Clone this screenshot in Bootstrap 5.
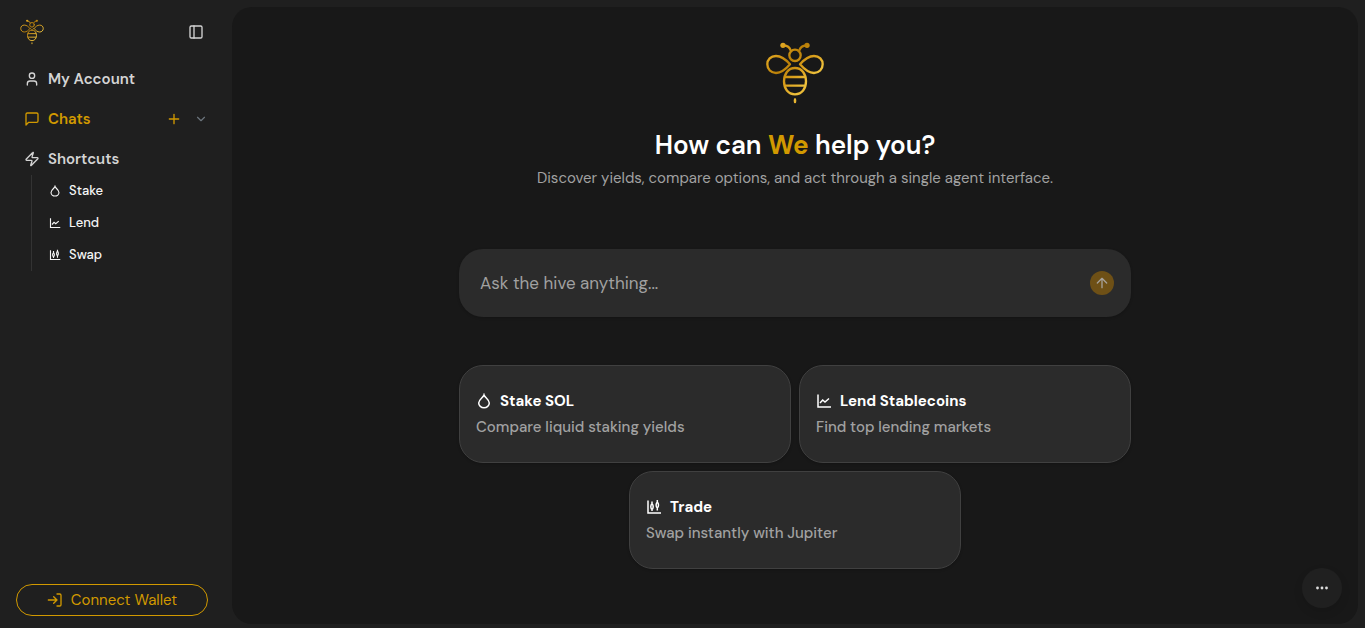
<!DOCTYPE html>
<html lang="en">
<head>
<meta charset="utf-8">
<meta name="viewport" content="width=device-width, initial-scale=1">
<title>The Hive</title>
<link href="https://cdn.jsdelivr.net/npm/bootstrap@5.3.0/dist/css/bootstrap.min.css" rel="stylesheet">
<style>
  :root { --gold: #d19900; --muted: #a1a1a1; --side: #1f1f1f; --panel: #181818; --tile: #2b2b2b; }
  body { background: var(--side); color: #fff; font-family: "DM Sans", Inter, sans-serif; font-size: 15px; line-height: 24px; }
  svg { display: block; flex: none; }
  a { color: inherit; text-decoration: none; }
  .line-icon { fill: none; stroke: currentColor; stroke-width: 2; stroke-linecap: round; stroke-linejoin: round; }
  .chart-icon { fill: none; stroke: currentColor; stroke-width: 1.5; }
  .icon-btn { background: none; border: 0; padding: 0; color: inherit; }
  .sidebar { width: 232px; flex: none; padding: 16px 24px 12px 16px; color: #d4d4d4; }
  .side-head { height: 31px; padding: 0 4px 0 3px; }
  .side-row { height: 40px; padding-left: 8px; font-weight: 600; }
  .gold { color: var(--gold); }
  .side-nav { margin-top: 12px; }
  .row-tools { gap: 12px; }
  .sub-nav { margin: -4px 0 0 15px; border-left: 1px solid #333; font-size: 13px; font-weight: 500; color: #f5f5f5; }
  .sub-nav a { height: 32px; gap: 8px; padding-left: 17px; }
  .wallet { height: 32px; border: 1px solid var(--gold); border-radius: 16px; background: none; color: var(--gold); }
  .panel { background: var(--panel); border-radius: 20px; margin: 7px 7px 4px 0; padding: 34px 16px 16px; min-width: 0; }
  .hero-title { font-size: 26px; line-height: 32px; font-weight: 600; margin: 24px 0 5px; }
  .hero-title .gold { font-weight: 700; }
  .subtitle { color: var(--muted); margin-bottom: 59px; }
  .content { max-width: 672px; }
  .ask { height: 68px; background: var(--tile); border-radius: 24px; padding: 0 17px 0 21px; margin-bottom: 48px; box-shadow: 0 1px 3px rgba(0,0,0,.2); }
  .ask input { background: none; border: 0; outline: 0; color: #fff; font-size: 17px; padding: 0; min-width: 0; }
  .ask input::placeholder { color: var(--muted); opacity: 1; }
  .send { width: 24px; height: 24px; border-radius: 50%; background: #6e5016; color: #a6a19a; }
  .tile { width: 332px; height: 98px; background: var(--tile); border: 1px solid #404040; border-radius: 24px; padding: 0 16px; color: #fff; box-shadow: 0 1px 3px rgba(0,0,0,.2); }
  .tile strong { font-weight: 700; font-size: 15px; }
  .tile-note { color: var(--muted); font-weight: 500; font-size: 15px; margin-top: 2px; }
  .more { right: 23px; bottom: 20px; width: 40px; height: 40px; border-radius: 50%; background: #202020; color: #ddd; box-shadow: 0 4px 10px rgba(0,0,0,.1); }
</style>
<script src="https://cdn.jsdelivr.net/npm/bootstrap@5.3.0/dist/js/bootstrap.bundle.min.js" defer></script>
</head>
<body>
<svg width="0" height="0" class="position-absolute" aria-hidden="true">
  <defs>
    <linearGradient id="honey" gradientUnits="userSpaceOnUse" x1="50" y1="40" x2="110" y2="100" spreadMethod="reflect">
      <stop offset="0" stop-color="#edc03c"/><stop offset=".5" stop-color="#dba01c"/><stop offset="1" stop-color="#b97f08"/>
    </linearGradient>
    <symbol id="bee" viewBox="39 33 192 192">
      <g fill="none" stroke="url(#honey)" stroke-width="7" stroke-linecap="round" stroke-linejoin="round">
        <circle cx="135" cy="76" r="17"/>
        <path d="M102 47Q117 47 122 61M168 47Q153 47 148 61"/>
        <path d="M120 103C108 89 96 78 78 78C62 78 52 89 52 103C52 118 63 129 78 129C96 129 108 117 120 103Z"/>
        <path d="M150 103C162 89 174 78 192 78C208 78 218 89 218 103C218 118 207 129 192 129C174 129 162 117 150 103Z"/>
        <path d="M135 114C114 114 102 132 102 154C102 176 114 193 135 193C156 193 168 176 168 154C168 132 156 114 135 114Z"/>
        <path d="M106 141H164M106 167H164"/>
      </g>
      <g fill="url(#honey)"><circle cx="99" cy="46" r="8"/><circle cx="171" cy="46" r="8"/><ellipse cx="135" cy="212" rx="4" ry="8"/></g>
    </symbol>
    <symbol id="drop" viewBox="0 0 16 16"><path d="M8 2C7.300 4.500 2.700 6.500 2.700 10A5.300 4.700 0 0 0 13.300 10C13.300 6.500 8.700 4.500 8 2Z"/></symbol>
    <symbol id="trend" viewBox="0 0 16 16"><path d="M2 1.500V14H15M4 10L6.700 7L9 9L13 5.500"/></symbol>
    <symbol id="candles" viewBox="0 0 16 16"><path d="M2 1.500V14H15M6 2.500V5M6 10V12M11.300 1V3.500M11.300 8.500V11.500M6 4.800Q4.800 6 4.800 7.700Q4.800 9.500 6 10.500Q7.200 9.500 7.200 7.700Q7.200 6 6 4.800ZM11.300 3Q10.100 4.300 10.100 6Q10.100 8 11.300 9Q12.500 8 12.500 6Q12.500 4.300 11.300 3Z"/></symbol>
  </defs>
</svg>
<div class="d-flex min-vh-100">
  <aside class="sidebar d-flex flex-column">
    <div class="side-head d-flex align-items-center justify-content-between">
      <a href="#" aria-label="Home"><svg width="26" height="26"><use href="#bee"/></svg></a>
      <button class="icon-btn" type="button" aria-label="Toggle sidebar"><svg class="line-icon" width="16" height="16" viewBox="0 0 24 24"><rect x="3" y="3" width="18" height="18" rx="2"/><path d="M9 3v18"/></svg></button>
    </div>
    <nav class="side-nav">
      <a class="side-row d-flex align-items-center gap-2" href="#"><svg class="line-icon" width="16" height="16" viewBox="0 0 24 24"><circle cx="12" cy="7" r="4"/><path d="M19 21v-2a4 4 0 0 0-4-4H9a4 4 0 0 0-4 4v2"/></svg>My Account</a>
      <div class="side-row row-tools d-flex align-items-center">
        <a class="gold d-flex align-items-center gap-2 flex-grow-1" href="#"><svg class="line-icon" width="16" height="16" viewBox="0 0 24 24"><path d="M21 15a2 2 0 0 1-2 2H7l-4 4V5a2 2 0 0 1 2-2h14a2 2 0 0 1 2 2z"/></svg>Chats</a>
        <button class="icon-btn gold" type="button" aria-label="New chat"><svg class="line-icon" width="16" height="16" viewBox="0 0 24 24"><path d="M5 12h14M12 5v14"/></svg></button>
        <button class="icon-btn text-secondary" type="button" aria-label="Expand chats"><svg class="line-icon" width="14" height="14" viewBox="0 0 24 24"><path d="m6 9 6 6 6-6"/></svg></button>
      </div>
      <a class="side-row d-flex align-items-center gap-2" href="#"><svg class="line-icon" width="16" height="16" viewBox="0 0 24 24"><path d="M4 14a1 1 0 0 1-.78-1.630l9.900-10.200a.5.5 0 0 1 .86.460l-1.920 6.020A1 1 0 0 0 13 10h7a1 1 0 0 1 .78 1.630l-9.900 10.200a.5.5 0 0 1-.86-.460l1.920-6.020A1 1 0 0 0 11 14z"/></svg>Shortcuts</a>
      <div class="sub-nav">
        <a class="d-flex align-items-center" href="#"><svg class="chart-icon" width="12" height="12"><use href="#drop"/></svg>Stake</a>
        <a class="d-flex align-items-center" href="#"><svg class="chart-icon" width="12" height="12"><use href="#trend"/></svg>Lend</a>
        <a class="d-flex align-items-center" href="#"><svg class="chart-icon" width="12" height="12"><use href="#candles"/></svg>Swap</a>
      </div>
    </nav>
    <button class="wallet mt-auto w-100 d-flex align-items-center justify-content-center gap-2" type="button"><svg class="line-icon" width="16" height="16" viewBox="0 0 24 24"><path d="M2 12h13M10 7l5 5-5 5M15 3h4a2 2 0 0 1 2 2v14a2 2 0 0 1-2 2h-4"/></svg>Connect Wallet</button>
  </aside>
  <main class="panel flex-grow-1 d-flex flex-column align-items-center">
    <svg width="64" height="64" role="img" aria-label="Bee logo"><use href="#bee"/></svg>
    <h1 class="hero-title text-center">How can <span class="gold">We</span> help you?</h1>
    <p class="subtitle text-center">Discover yields, compare options, and act through a single agent interface.</p>
    <div class="content w-100">
      <form class="ask d-flex align-items-center gap-3">
        <input class="flex-grow-1" type="text" placeholder="Ask the hive anything..." aria-label="Ask the hive anything">
        <button class="icon-btn send d-flex align-items-center justify-content-center" type="button" aria-label="Send"><svg class="line-icon" width="16" height="16" viewBox="0 0 24 24"><path d="m5 12 7-7 7 7M12 19V5"/></svg></button>
      </form>
      <div class="d-flex flex-wrap justify-content-center gap-2">
        <button class="tile text-start" type="button"><span class="d-flex align-items-center gap-2"><svg class="chart-icon" width="16" height="16"><use href="#drop"/></svg><strong>Stake SOL</strong></span><span class="tile-note d-block">Compare liquid staking yields</span></button>
        <button class="tile text-start" type="button"><span class="d-flex align-items-center gap-2"><svg class="chart-icon" width="16" height="16"><use href="#trend"/></svg><strong>Lend Stablecoins</strong></span><span class="tile-note d-block">Find top lending markets</span></button>
        <button class="tile text-start" type="button"><span class="d-flex align-items-center gap-2"><svg class="chart-icon" width="16" height="16"><use href="#candles"/></svg><strong>Trade</strong></span><span class="tile-note d-block">Swap instantly with Jupiter</span></button>
      </div>
    </div>
  </main>
</div>
<button class="icon-btn more position-fixed d-flex align-items-center justify-content-center" type="button" aria-label="More"><svg width="16" height="16" viewBox="0 0 16 16" fill="currentColor"><circle cx="3.500" cy="8" r="1.400"/><circle cx="8" cy="8" r="1.400"/><circle cx="12.500" cy="8" r="1.400"/></svg></button>
</body>
</html>
